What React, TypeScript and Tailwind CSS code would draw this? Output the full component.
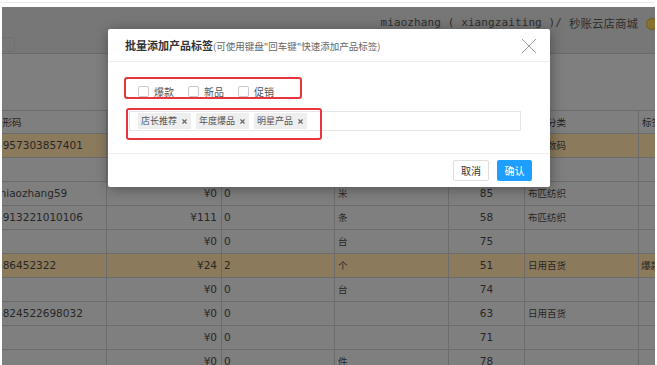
import { X } from 'lucide-react'

const cjk = '"Noto Sans CJK SC", sans-serif'

type Row = {
    code: string
    price: string
    stock: string
    unit: string
    sort: string
    cat: string
    tag: string
    hot?: boolean
}

const rows: Row[] = [
    { code: '6957303857401', price: '¥0', stock: '0', unit: '台', sort: '90', cat: '手机数码', tag: '', hot: true },
    { code: '', price: '¥0', stock: '0', unit: '', sort: '88', cat: '', tag: '' },
    { code: 'miaozhang59', price: '¥0', stock: '0', unit: '米', sort: '85', cat: '布匹纺织', tag: '' },
    { code: '6913221010106', price: '¥111', stock: '0', unit: '条', sort: '58', cat: '布匹纺织', tag: '' },
    { code: '', price: '¥0', stock: '0', unit: '台', sort: '75', cat: '', tag: '' },
    { code: '686452322', price: '¥24', stock: '2', unit: '个', sort: '51', cat: '日用百货', tag: '爆款', hot: true },
    { code: '', price: '¥0', stock: '0', unit: '台', sort: '74', cat: '', tag: '' },
    { code: '6824522698032', price: '¥0', stock: '0', unit: '', sort: '63', cat: '日用百货', tag: '' },
    { code: '', price: '¥0', stock: '0', unit: '', sort: '71', cat: '', tag: '' },
    { code: '', price: '¥0', stock: '0', unit: '件', sort: '78', cat: '', tag: '' },
]

const headers = ['条形码', '零售价', '库存', '单位', '排序', '商品分类', '标签']

function Cell({ children, className = '' }: { children?: React.ReactNode; className?: string }) {
    return (
        <div className={`h-[24px] border-r border-b border-[#6c6c6c] flex items-center overflow-hidden whitespace-nowrap ${className}`}>
            {children}
        </div>
    )
}

function Checkbox({ label }: { label: string }) {
    return (
        <label className="flex items-center gap-[5px]">
            <span className="w-[11px] h-[11px] border border-[#c9c9c9] rounded-[2px] bg-white" />
            <span className="text-[10px] text-[#555]" style={{ fontFamily: cjk }}>{label}</span>
        </label>
    )
}

function Tag({ label }: { label: string }) {
    return (
        <span className="h-[16px] flex items-center gap-[4px] px-[3px] bg-[#eeeeee] rounded-[1px] text-[9px] text-[#555]">
            {label}
            <X className="w-[7px] h-[7px] text-[#666]" strokeWidth={4} />
        </span>
    )
}

export default function App() {
    return (
        <div className="relative w-[657px] h-[365px] overflow-hidden bg-white" style={{ fontFamily: '"DejaVu Sans", "Noto Sans CJK SC", sans-serif' }}>
            {/* top strip */}
            <div className="h-[7px] pt-[2px]">
                <div className="h-px bg-[#ececec] mr-[2px]" />
            </div>

            <div className="mx-[2px] h-[358px] bg-[#7f7f7f] flex flex-col overflow-hidden">
                {/* page header (dimmed) */}
                <div className="h-[47px] shrink-0 bg-[#777777] border-b border-[#6a6a6a] flex items-start justify-between">
                    <div className="mt-[30px] -ml-[20px] w-[33px] h-[15px] rounded-[4px] border border-[#707070]" />
                    <div className="flex items-center mt-[8px] text-[#2e2e2e]">
                        <span className="text-[11px] tracking-[0.1px]" style={{ fontFamily: '"DejaVu Sans Mono", monospace' }}>
                            miaozhang ( xiangzaiting )/
                        </span>
                        <span className="ml-[7px] text-[11.5px]" style={{ fontFamily: cjk }}>秒账云店商城</span>
                        <span className="ml-[8px] -mr-[3px] w-[12px] h-[12px] rounded-full bg-[#8a7330] border border-[#6e5a22]" />
                    </div>
                </div>

                <div className="h-[56px] shrink-0" />

                {/* table (dimmed) */}
                <div className="-ml-[11px] grid grid-cols-[116px_115px_113px_114px_76px_114px_80px] text-[10.5px] text-[#272727]">
                    {headers.map((h, i) => (
                        <Cell key={h} className={`border-t ${i === 4 ? 'justify-center' : 'px-[3px]'} ${i === 0 ? 'pl-[2px]' : ''} text-[9.5px] text-[#222]`}>
                            <span style={{ fontFamily: cjk }}>{h}</span>
                        </Cell>
                    ))}
                    {rows.map((r, idx) => {
                        const bg = r.hot ? 'bg-[#8b7a5c]' : ''
                        return (
                            <div key={idx} className="contents">
                                <Cell className={`${bg} pl-[5px]`}>{r.code}</Cell>
                                <Cell className={`${bg} justify-end pr-[4px]`}>{r.price}</Cell>
                                <Cell className={`${bg} px-[2px]`}>{r.stock}</Cell>
                                <Cell className={`${bg} px-[3px] text-[9.5px]`}><span style={{ fontFamily: cjk }}>{r.unit}</span></Cell>
                                <Cell className={`${bg} justify-center`}>{r.sort}</Cell>
                                <Cell className={`${bg} px-[3px] text-[9.5px]`}><span style={{ fontFamily: cjk }}>{r.cat}</span></Cell>
                                <Cell className={`${bg} px-[2px] text-[9.5px]`}><span style={{ fontFamily: cjk }}>{r.tag}</span></Cell>
                            </div>
                        )
                    })}
                </div>
            </div>

            {/* modal */}
            <div
                className="absolute left-[108px] top-[29px] w-[442px] h-[158px] bg-white rounded-[2px] shadow-[1px_2px_14px_rgba(0,0,0,0.35)] flex flex-col"
                style={{ fontFamily: cjk }}
            >
                <div className="h-[33px] shrink-0 border-b border-[#eeeeee] flex items-center justify-between pl-[17px] pr-[13px]">
                    <div className="flex items-baseline">
                        <span className="text-[11px] font-bold text-[#333]">批量添加产品标签</span>
                        <span className="text-[9.5px] text-[#666]">(可使用键盘"回车键"快速添加产品标签)</span>
                    </div>
                    <svg width="16" height="16" viewBox="0 0 16 16" className="mt-[1px]">
                        <path d="M1 1 L15 15 M15 1 L1 15" stroke="#9a9a9a" strokeWidth="1" fill="none" />
                    </svg>
                </div>

                <div className="relative flex-1 flex flex-col">
                    <div className="flex items-center gap-[14px] pl-[30px] pt-[22px]">
                        <Checkbox label="爆款" />
                        <Checkbox label="新品" />
                        <Checkbox label="促销" />
                    </div>
                    <div className="ml-[21px] mt-[12px] w-[392px] h-[20px] border border-[#e6e6e6] flex items-center gap-[5px] pl-[8px]">
                        <Tag label="店长推荐" />
                        <Tag label="年度爆品" />
                        <Tag label="明星产品" />
                    </div>

                    {/* red annotation boxes */}
                    <div className="absolute left-[16px] top-[15px] w-[178px] h-[22px] border-2 border-[#e8363a] rounded-[3px]" />
                    <div className="absolute left-[18px] top-[46px] w-[196px] h-[32px] border-2 border-[#e8363a] rounded-[3px]" />
                </div>

                <div className="h-[34px] shrink-0 border-t border-[#eeeeee] flex items-start justify-end gap-[8px] pr-[18px] pt-[6px]">
                    <button className="w-[36px] h-[21px] border border-[#dedede] bg-white text-[10px] text-[#333] rounded-[2px]">取消</button>
                    <button className="w-[35px] h-[21px] bg-[#1E9FFF] text-[10px] text-white rounded-[2px]">确认</button>
                </div>
            </div>
        </div>
    )
}
